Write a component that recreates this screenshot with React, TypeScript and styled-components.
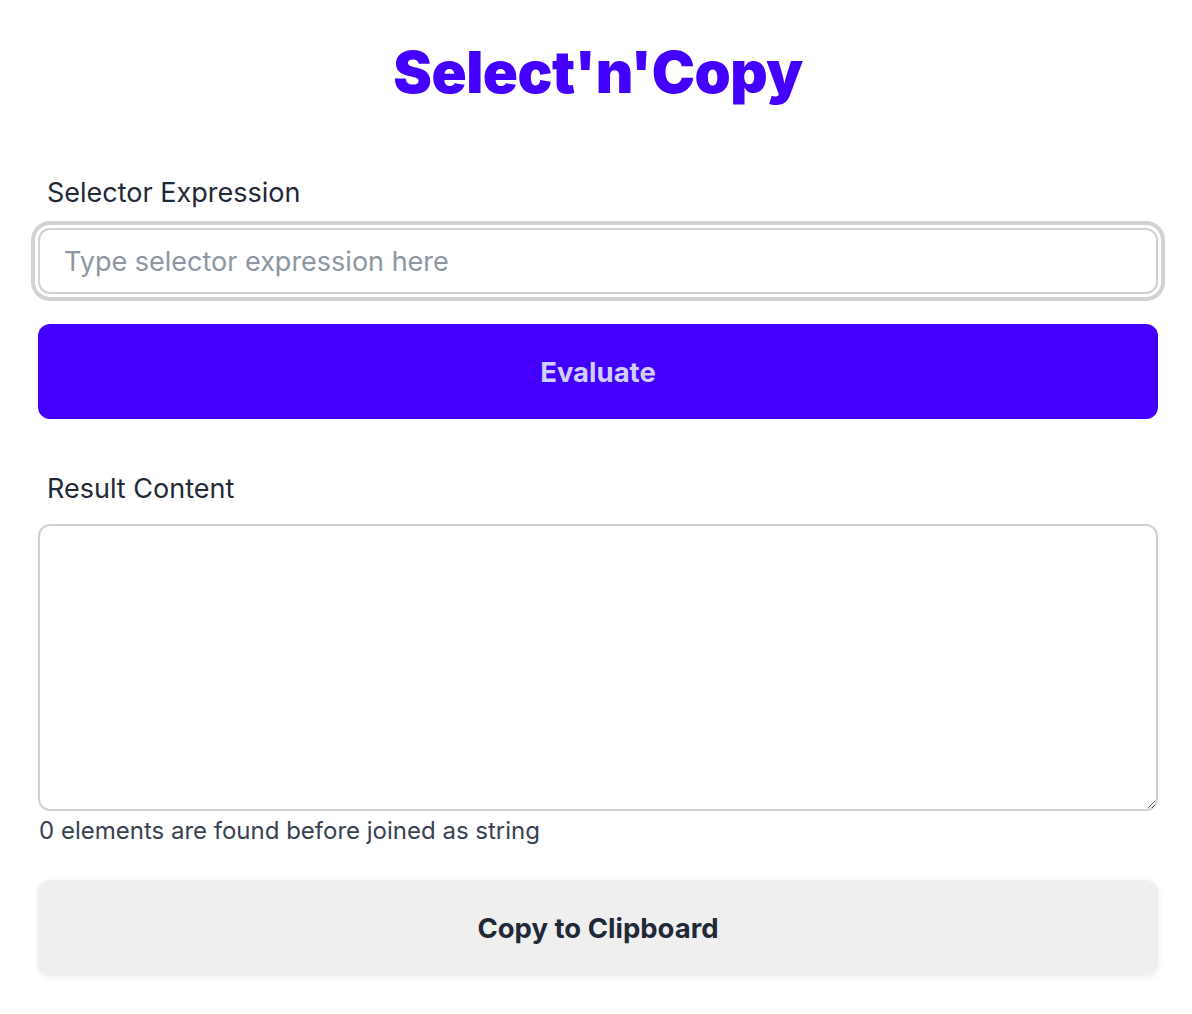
import React, { useState } from "react";
import styled, { createGlobalStyle } from "styled-components";

const GlobalStyle = createGlobalStyle`
  html, body {
    margin: 0;
    padding: 0;
    background: #ffffff;
  }
  body {
    font-family: Inter, "Noto Sans", sans-serif;
    color: #1f2937;
  }
`;

const Page = styled.main`
  box-sizing: border-box;
  width: 1120px;
  margin: 0 0 0 38px;
  padding: 36px 0 40px;
  display: flex;
  flex-direction: column;
`;

const Title = styled.h1`
  margin: 0 0 69px;
  text-align: center;
  font-size: 58px;
  line-height: 72px;
  font-weight: 900;
  letter-spacing: -0.5px;
  color: #4400ff;
`;

const Label = styled.label`
  display: block;
  padding-left: 9px;
  margin-bottom: 19px;
  font-size: 27px;
  line-height: 32px;
  font-weight: 400;
  color: #1f2937;
`;

const TextInput = styled.input`
  box-sizing: border-box;
  width: 100%;
  height: 66px;
  padding: 0 24px;
  border: 2px solid #d1d1d6;
  border-radius: 12px;
  box-shadow: 0 0 0 3px #ffffff, 0 0 0 7px #d1d1d6;
  font-family: inherit;
  font-size: 27px;
  color: #1f2937;
  outline: none;

  &::placeholder {
    color: #8e96a3;
  }
`;

const Button = styled.button<{ $variant: "primary" | "secondary" }>`
  box-sizing: border-box;
  width: 100%;
  height: 95px;
  border: none;
  border-radius: 12px;
  font-family: inherit;
  font-size: 27.5px;
  font-weight: 700;
  cursor: pointer;
  background: ${(p) => (p.$variant === "primary" ? "#4400ff" : "#efefef")};
  color: ${(p) => (p.$variant === "primary" ? "#cfd0ff" : "#1f2937")};
  box-shadow: ${(p) =>
    p.$variant === "primary" ? "none" : "0 2px 6px rgba(0, 0, 0, 0.08)"};
`;

const Section = styled.section<{ $gap: number }>`
  margin-top: ${(p) => p.$gap}px;
  display: flex;
  flex-direction: column;
`;

const ResultArea = styled.textarea`
  box-sizing: border-box;
  display: block;
  width: 100%;
  height: 287px;
  padding: 16px 24px;
  border: 2px solid #d1d1d6;
  border-radius: 12px;
  font-family: inherit;
  font-size: 27px;
  color: #1f2937;
  outline: none;
  resize: vertical;
`;

const Hint = styled.p`
  margin: 6px 0 0 1px;
  font-size: 24px;
  line-height: 28px;
  color: #374151;
`;

export default function App() {
  const [selector, setSelector] = useState("");
  const [result, setResult] = useState("");
  const [count, setCount] = useState(0);

  const evaluate = () => {
    setCount(0);
    setResult("");
  };

  return (
    <>
      <GlobalStyle />
      <Page>
        <Title>Select'n'Copy</Title>

        <Label htmlFor="selector">Selector Expression</Label>
        <TextInput
          id="selector"
          value={selector}
          onChange={(e) => setSelector(e.target.value)}
          placeholder="Type selector expression here"
        />

        <Section $gap={30}>
          <Button $variant="primary" onClick={evaluate}>
            Evaluate
          </Button>
        </Section>

        <Section $gap={54}>
          <Label htmlFor="result">Result Content</Label>
          <ResultArea
            id="result"
            value={result}
            onChange={(e) => setResult(e.target.value)}
          />
          <Hint>{count} elements are found before joined as string</Hint>
        </Section>

        <Section $gap={35}>
          <Button $variant="secondary">Copy to Clipboard</Button>
        </Section>
      </Page>
    </>
  );
}
